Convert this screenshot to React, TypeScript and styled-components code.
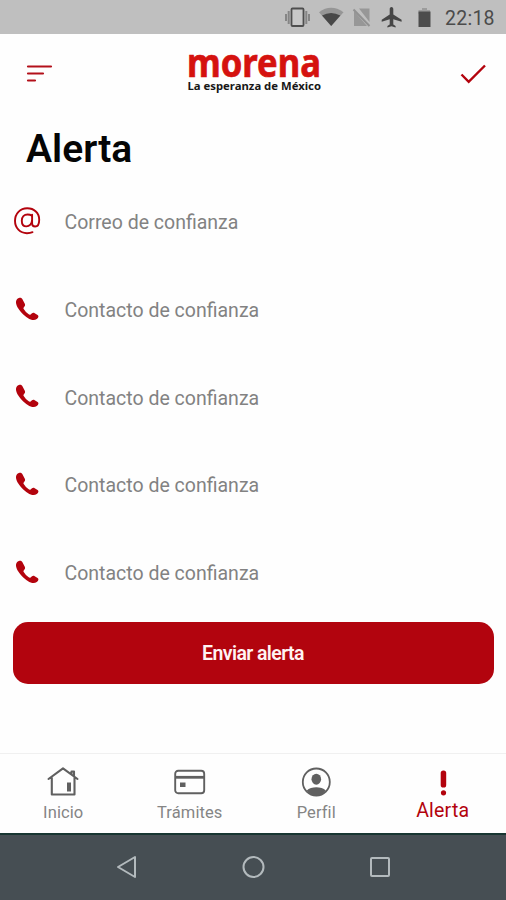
import React from "react";
import styled, { createGlobalStyle } from "styled-components";

const GlobalStyle = createGlobalStyle`
  * { box-sizing: border-box; }
  body { margin: 0; background: #fefefe; font-family: Roboto, "Liberation Sans", sans-serif; }
  svg { display: block; flex: none; overflow: visible; }
`;

const Screen = styled.div`
  width: 506px;
  height: 900px;
  display: flex;
  flex-direction: column;
  overflow: hidden;
  background: #fefefe;
`;

const StatusBar = styled.div`
  height: 34px;
  flex: none;
  background: #bfbfbf;
  display: flex;
  align-items: center;
  justify-content: flex-end;
  padding: 0 11px 0 0;
`;

const Clock = styled.time`
  width: 50px;
  margin-left: 13px;
  padding-top: 4px;
  font-size: 19.5px;
  line-height: 22px;
  letter-spacing: 0.25px;
  color: #4b4b4b;
  white-space: nowrap;
`;

const Header = styled.header`
  height: 78px;
  flex: none;
  display: flex;
  justify-content: space-between;
  padding: 0 20px 0 26px;
`;

const HeaderIcon = styled.button`
  border: 0;
  padding: 0;
  height: 78px;
  width: 26px;
  background: none;
`;

const Title = styled.h1`
  margin: 13px 0 0 26px;
  height: 52px;
  font-size: 39px;
  line-height: 48px;
  font-weight: 600;
  letter-spacing: 0;
  color: #050505;
`;

const Fields = styled.div`
  display: flex;
  flex-direction: column;
`;

const Field = styled.div`
  height: 87.8px;
  display: flex;
  align-items: center;
  padding-left: 13px;
  color: #b3030d;
`;

const FieldIcon = styled.span`
  width: 28px;
  height: 28px;
  display: flex;
  align-items: center;
  justify-content: center;
`;

const Placeholder = styled.span`
  margin-left: 23.5px;
  padding-top: 3.4px;
  font-size: 19.5px;
  color: #828282;
`;

const SendButton = styled.button`
  margin: 6px 12px 0 13px;
  height: 62px;
  flex: none;
  border: 0;
  border-radius: 15px;
  background: #b2040e;
  color: #fff3f3;
  font-family: inherit;
  font-size: 19.5px;
  font-weight: 600;
  letter-spacing: -0.6px;
  padding: 1px 1px 0 0;
`;

const Tabs = styled.nav`
  margin-top: auto;
  height: 80px;
  flex: none;
  display: grid;
  grid-template-columns: repeat(4, 1fr);
  border-top: 1px solid #f0f0f0;
`;

const Tab = styled.div`
  display: flex;
  flex-direction: column;
  align-items: center;
  padding-top: 12px;
  color: #606060;
`;

const TabLabel = styled.span<{ $active?: boolean }>`
  margin-top: ${(p) => (p.$active ? "1px" : "3px")};
  font-size: ${(p) => (p.$active ? "19.5px" : "16.5px")};
  line-height: 24px;
  letter-spacing: ${(p) => (p.$active ? "0.2px" : "0.1px")};
  color: ${(p) => (p.$active ? "#b3030d" : "#858585")};
`;

const ActiveTab = styled(Tab)`
  color: #b3030d;
`;

const NavigationBar = styled.div`
  height: 67px;
  flex: none;
  background: #464e53;
  border-top: 2px solid #183632;
  display: flex;
  justify-content: center;
  align-items: center;
  gap: 102px;
  padding: 0 0 2px;
`;

const StatusIcons = () => (
  <svg width="150" height="34" viewBox="282 0 150 34">
    <path d="M286 14v7M288.700 11v13M309 14v7M306.300 11v13" stroke="#858585" strokeWidth="2" />
    <rect x="291.500" y="8.500" width="12" height="17.500" rx="1" fill="#c8c8c8" stroke="#4e4e4e" strokeWidth="1.800" />
    <path d="M319 12.200q12-8.800 24.500 0L331.200 26z" fill="#969696" />
    <path d="M322 15.500q9-5 18.400 0L331.200 26z" fill="#484848" />
    <path d="M359 8.500h10.500V22zM354 11v15h13z" fill="#979797" />
    <path d="M353.500 9.500L369.500 26" stroke="#919191" strokeWidth="2" />
    <path d="M391.500 7c-1.200 0-1.800 1-1.800 2.200v5.300l-8 5.200v2l8-2.500v5.200l-2.300 1.700v1.400l4.100-1.200 4.100 1.200v-1.400l-2.300-1.700v-5.200l8.300 2.500v-2l-8.300-5.200V9.200c0-1.200-.6-2.200-1.800-2.200z" fill="#464646" />
    <path d="M422 8h5v2h3v4h-11.500v-4h3.500z" fill="#9c9c9c" />
    <path d="M418.500 11.500h12V27h-12z" fill="#4c4c4c" />
  </svg>
);

const Logo = () => (
  <svg width="144" height="78" viewBox="184 34 144 78">
    <text x="187" y="76.500" textLength="134" lengthAdjust="spacingAndGlyphs" fontFamily="'Noto Sans', sans-serif" fontSize="39" fontWeight="700" fill="#d5120f" stroke="#d5120f" strokeWidth="0.700">morena</text>
    <text x="187.500" y="90" textLength="133.500" lengthAdjust="spacingAndGlyphs" fontFamily="'Noto Sans', sans-serif" fontSize="10.500" fontWeight="700" fill="#171717">La esperanza de México</text>
  </svg>
);

const AtIcon = () => (
  <svg width="28" height="28" viewBox="0 0 28 28" fill="none" stroke="currentColor" strokeWidth="1.900" strokeLinecap="round">
    <path d="M19.500 25.200C17.800 26 16 26.200 14 26.200 7 26.200 2 21 2 13.800 2 6.600 7.200 1.300 14.200 1.300S26.200 6 26.200 12.700c0 4.300-1.500 6.800-4.100 6.800-2 0-3-1.200-3-3V7.600" />
    <path d="M19 8.800c-1.200-.8-2.800-1.300-4.400-1.300-3.500 0-5.800 2.600-5.800 6.200 0 3.300 1.700 5.700 4.600 5.700 3.100 0 5.600-2.600 5.600-5.800" />
  </svg>
);

const PhoneIcon = () => (
  <svg width="28" height="28" viewBox="0 0 28 28" fill="currentColor">
    <path d="M6.500 2.800c-1.800.2-3.300 1.800-3.500 4-.3 3.200 2.300 7.400 5.800 11.200 3.900 4.100 8.300 7 11.700 7.100 2.500 0 4.600-1.500 4.900-3.300.1-.8-.2-1.300-.8-1.800L21.700 18.200c-.9-.6-1.900-.6-2.700.1l-1.400 1.100c-.6.400-1.200.4-1.900-.1-2-1.500-3.700-3.300-5-5.400-.4-.7-.3-1.200.2-1.700l.7-.9c.6-.8.6-1.600.2-2.500L9.300 4c-.6-.9-1.700-1.400-2.800-1.200z" />
  </svg>
);

const HomeIcon = () => (
  <svg width="32" height="32" viewBox="0 0 32 32" fill="none" stroke="currentColor" strokeWidth="2.100" strokeLinejoin="round" strokeLinecap="round">
    <path d="M1.500 13L16 2.300 30.500 13M4.800 11.500v17h22.700v-17M24.500 8V5.500h2.500v4.500" />
    <path d="M20 16.500h4v9h-4z" fill="currentColor" stroke="none" />
  </svg>
);

const CardIcon = () => (
  <svg width="32" height="32" viewBox="0 0 32 32" fill="none" stroke="currentColor" strokeWidth="1.900">
    <rect x="1.200" y="4.700" width="29" height="22.500" rx="3" />
    <path d="M1.500 11.300h28.500" strokeWidth="2.800" />
    <rect x="6" y="16.500" width="5.500" height="4.500" fill="currentColor" stroke="none" />
  </svg>
);

const ProfileIcon = () => (
  <svg width="32" height="32" viewBox="0 0 32 32" fill="currentColor">
    <circle cx="16.300" cy="16" r="13.500" fill="none" stroke="currentColor" strokeWidth="1.800" />
    <ellipse cx="16.300" cy="13.200" rx="4.800" ry="5.500" />
    <path d="M6.800 24.500c2-2.400 6-3.200 9.500-3.200s7.500.8 9.500 3.200c-2.500 3.500-5.500 5-9.500 5s-7-1.500-9.500-5z" />
  </svg>
);

const AlertIcon = () => (
  <svg width="32" height="32" viewBox="0 0 32 32" fill="currentColor">
    <rect x="13.700" y="4.500" width="5.500" height="17" rx="2.600" />
    <circle cx="16.500" cy="26.800" r="2.600" />
  </svg>
);

const fields = [
  { label: "Correo de confianza", Icon: AtIcon },
  ...Array.from({ length: 4 }, () => ({ label: "Contacto de confianza", Icon: PhoneIcon })),
];

const tabs = [
  { label: "Inicio", Icon: HomeIcon },
  { label: "Trámites", Icon: CardIcon },
  { label: "Perfil", Icon: ProfileIcon },
];

export default function App() {
  return (
    <>
      <GlobalStyle />
      <Screen>
        <StatusBar>
          <StatusIcons />
          <Clock>22:18</Clock>
        </StatusBar>
        <Header>
          <HeaderIcon aria-label="Menú">
            <svg width="26" height="78" viewBox="26 34 26 78" stroke="#b3101a" strokeWidth="2.200" strokeLinecap="round">
              <path d="M28 66.500h23M28 73.500h15M28 80.500h7" />
            </svg>
          </HeaderIcon>
          <Logo />
          <HeaderIcon aria-label="Confirmar">
            <svg width="26" height="78" viewBox="460 34 26 78" fill="none" stroke="#b3030d" strokeWidth="2.400">
              <path d="M461.500 74.500l7.200 7.300L485 65.500" />
            </svg>
          </HeaderIcon>
        </Header>
        <Title>Alerta</Title>
        <Fields>
          {fields.map(({ label, Icon }, index) => (
            <Field key={index}>
              <FieldIcon><Icon /></FieldIcon>
              <Placeholder>{label}</Placeholder>
            </Field>
          ))}
        </Fields>
        <SendButton>Enviar alerta</SendButton>
        <Tabs>
          {tabs.map(({ label, Icon }) => (
            <Tab key={label}>
              <Icon />
              <TabLabel>{label}</TabLabel>
            </Tab>
          ))}
          <ActiveTab>
            <AlertIcon />
            <TabLabel $active>Alerta</TabLabel>
          </ActiveTab>
        </Tabs>
        <NavigationBar>
          <svg width="24" height="24" viewBox="0 0 24 24" fill="none" stroke="#b3babd" strokeWidth="2" strokeLinejoin="round">
            <path d="M20 2v20L3 12z" />
          </svg>
          <svg width="24" height="24" viewBox="0 0 24 24" fill="none" stroke="#b3babd" strokeWidth="2">
            <circle cx="12.500" cy="12" r="10" />
          </svg>
          <svg width="24" height="24" viewBox="0 0 24 24" fill="none" stroke="#b3babd" strokeWidth="2">
            <rect x="4" y="3" width="18" height="18" rx="1" />
          </svg>
        </NavigationBar>
      </Screen>
    </>
  );
}
